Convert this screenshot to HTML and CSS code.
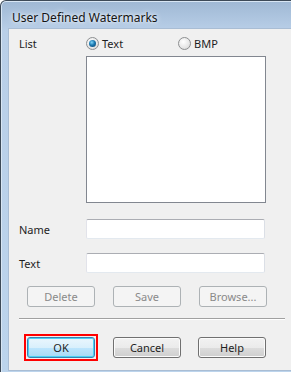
FILE: index.html
```html
<!DOCTYPE html>
<html>

<head>
    <title>User Defined Watermarks</title>

    <link rel="stylesheet" href="styles.css">
</head>

<body>

    <div class="window">
        <div class="titlebar">User Defined Watermarks</div>

        <div class="content">
            <div class="row radio-row">
                <span class="label">List</span>
                <label class="radio radio-text"><span class="dot checked"></span>Text</label>
                <label class="radio"><span class="dot"></span>BMP</label>
            </div>

            <div class="listbox"></div>

            <div class="row field-row name-row">
                <span class="label">Name</span>
                <div class="input"></div>
            </div>

            <div class="row field-row text-row">
                <span class="label">Text</span>
                <div class="input"></div>
            </div>

            <div class="buttons top-buttons">
                <button class="btn" disabled>Delete</button>
                <button class="btn" disabled>Save</button>
                <button class="btn" disabled>Browse...</button>
            </div>

            <hr class="sep">

            <div class="buttons bottom-buttons">
                <span class="focus-ring"><button class="btn btn-default">OK</button></span>
                <button class="btn">Cancel</button>
                <button class="btn">Help</button>
            </div>
        </div>
    </div>

</body>

</html>
```

FILE: styles.css
```css
body {
    margin: 0;
    background: #ffffff;
    font-family: "Noto Sans", "DejaVu Sans", sans-serif;
    font-size: 11px;
    color: #1e1e1e;
}

/**
 * Window frame
 */
.window {
    width: 289px;
    height: 370px;
    border: 1px solid #3d4a58;
    border-bottom-color: #2a9bc4;
    border-radius: 6px 6px 0 0;
    background: linear-gradient(to bottom, #9fb8d4 0, #b9cfe8 30px, #bcd4ec 100%);
    padding: 0 6px 6px 7px;
    box-sizing: content-box;
    display: flex;
    flex-direction: column;
    box-shadow: inset 0 0 0 1px #d8e6f4;
}

.titlebar {
    height: 27px;
    line-height: 34px;
    padding-left: 4px;
    font-size: 12px;
    color: #141414;
    text-shadow: 0 0 6px #ffffff, 0 0 3px #e8f0fa;
}

.content {
    flex: 1;
    background: #f0f0f0;
    border: 1px solid #a9bdd4;
    position: relative;
}

/**
 * Rows
 */
.row {
    display: flex;
    align-items: center;
}

.label {
    width: 67px;
    padding-left: 10px;
    flex: none;
}

.radio-row {
    height: 16px;
    margin-top: 6px;
}

.radio {
    display: flex;
    align-items: center;
    gap: 3px;
}

.radio-text {
    width: 92px;
}

.dot {
    width: 11px;
    height: 11px;
    border-radius: 50%;
    border: 1px solid #8d8f91;
    background: radial-gradient(circle at 40% 35%, #ffffff 0, #e6e6e6 60%, #cfcfcf 100%);
    position: relative;
}

.dot.checked::after {
    content: "";
    position: absolute;
    left: 2px;
    top: 2px;
    width: 7px;
    height: 7px;
    border-radius: 50%;
    background: radial-gradient(circle at 40% 35%, #7fd4f8 0, #1a78b0 45%, #0c3f66 100%);
}

.listbox {
    margin: 5px 0 0 77px;
    width: 178px;
    height: 145px;
    background: #ffffff;
    border: 1px solid #828790;
}

.field-row {
    height: 20px;
}

.name-row {
    margin-top: 16px;
}

.text-row {
    margin-top: 14px;
}

.input {
    width: 177px;
    height: 18px;
    background: #ffffff;
    border: 1px solid #abadb3;
    border-color: #abadb3 #dbdfe6 #e3e9ef #e2e3ea;
    border-radius: 2px;
}

/**
 * Buttons
 */
.buttons {
    display: flex;
    align-items: center;
    padding-left: 18px;
    gap: 18px;
}

.top-buttons {
    margin-top: 13px;
}

.btn {
    width: 68px;
    height: 21px;
    padding: 0;
    border: 1px solid #707070;
    border-radius: 3px;
    background: linear-gradient(to bottom, #f2f2f2 0, #ebebeb 50%, #dddddd 50%, #cfcfcf 100%);
    font-family: "Noto Sans", "DejaVu Sans", sans-serif;
    font-size: 11px;
    color: #1e1e1e;
    box-shadow: inset 0 0 0 1px #fbfbfb;
}

.btn:disabled {
    border-color: #adb2b5;
    background: #f4f4f4;
    color: #8a8a8a;
    box-shadow: none;
}

.sep {
    margin: 11px 11px 0 10px;
    border: 0;
    border-top: 1px solid #a0a0a0;
    border-bottom: 1px solid #ffffff;
    height: 0;
}

.bottom-buttons {
    margin-top: 14px;
    padding-left: 15px;
    gap: 17px;
}

.focus-ring {
    display: block;
    border: 2px solid #ff0000;
    padding: 1px;
    margin-right: -2px;
    line-height: 0;
}

.btn-default {
    border-color: #3c7fb1;
    background: linear-gradient(to bottom, #eaf6fd 0, #d9f0fc 50%, #bee6fd 50%, #a7d9f5 100%);
    box-shadow: inset 0 0 0 1px #48d2f4;
}
```
